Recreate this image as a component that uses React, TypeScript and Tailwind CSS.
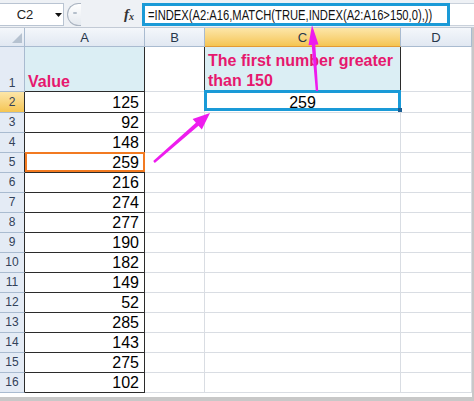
import React from "react";

const values = [125, 92, 148, 259, 216, 274, 277, 190, 182, 149, 52, 285, 143, 275, 102];

const grid = "border-r border-b border-[#d9dde3]";
const hdrBase =
  "flex items-center justify-center border-r border-b border-[#a9bbd0] text-[13px] leading-none text-[#27364a]";
const hdrNormal = "bg-linear-to-b from-[#f4f7fb] to-[#e1e8f2]";
const hdrSel = "bg-linear-to-b from-[#fce6a8] to-[#f5c550] border-b-[#e39a35]";

function RowHdr({ n, selected, tall }: { n: number; selected?: boolean; tall?: boolean }) {
  return (
    <div
      className={`flex justify-center border-b text-[12px] text-[#33425a] ${
        tall ? "items-end pb-[2px] leading-none border-r border-[#a9bbd0]" : "items-center leading-[19px] border-r border-b-[#a9bbd0] border-r-[#2b2b2b]"
      } ${selected ? "bg-linear-to-b from-[#fce6a8] to-[#f5c550]" : "bg-[#e4ebf5]"}`}
    >
      {n}
    </div>
  );
}

export default function App() {
  return (
    <div className="relative h-[401px] w-[474px] overflow-hidden bg-white font-['Liberation_Sans',Arial,sans-serif] text-black">
      {/* Formula bar */}
      <div className="flex h-[28px] border-b border-[#c2cad5] bg-[#eef1f5] pt-[3px] pb-px">
        <div className="flex w-[64px] items-center border-y border-r border-[#b9c4d2] bg-white">
          <span className="w-[50px] text-center text-[13px] leading-none text-[#222]">C2</span>
          <svg width="7" height="4" viewBox="0 0 7 4" className="ml-[5px]">
            <path d="M0 0H7L3.5 4Z" fill="#111" />
          </svg>
        </div>
        <div className="ml-[3px] flex w-[14px] items-start justify-center rounded-l-full border border-r-0 border-[#aab4c1] bg-linear-to-b from-white to-[#e4e9ef] pt-[8px]">
          <div className="h-[2px] w-[4px] rounded-full bg-[#b5bfcb]" />
        </div>
        <div className="flex w-[61px] items-center justify-end pr-[8px] text-[#333]">
          <span className="font-['Liberation_Serif',serif] text-[15px] font-bold italic leading-none">f</span>
          <span className="translate-y-[2px] font-['Liberation_Serif',serif] text-[10px] font-bold italic leading-none">x</span>
        </div>
        <div className="flex w-[308px] items-center overflow-hidden border-[3px] border-[#1a9ad7] bg-white pl-[3px]">
          <span className="inline-block origin-left scale-x-[0.8] whitespace-nowrap text-[14px] leading-none text-[#111]">
            =INDEX(A2:A16,MATCH(TRUE,INDEX(A2:A16&gt;150,0),))
          </span>
        </div>
        <div className="flex-1 border-y border-[#c9d1db] bg-white" />
      </div>

      {/* Sheet */}
      <div className="flex">
        <div className="grid grid-cols-[25px_120px_60px_196px_71px] grid-rows-[19px_45px_21px_repeat(14,20px)]">
          {/* Column headers */}
          <div className={`relative border-r border-b border-[#a9bbd0] ${hdrNormal}`}>
            <svg className="absolute left-[12px] top-[5px]" width="10" height="10" viewBox="0 0 10 10">
              <path d="M10 0V10H0Z" fill="#b6c2d0" />
            </svg>
          </div>
          <div className={`${hdrBase} ${hdrNormal}`}>A</div>
          <div className={`${hdrBase} ${hdrNormal}`}>B</div>
          <div className={`${hdrBase} ${hdrSel}`}>C</div>
          <div className={`${hdrBase} ${hdrNormal}`}>D</div>

          {/* Row 1 */}
          <RowHdr n={1} tall />
          <div className="flex items-end border-r border-b border-[#2b2b2b] bg-[#dbeef4] pb-px pl-[3px] text-[16px] font-bold leading-none text-[#e6186e]">
            Value
          </div>
          <div className="border-r border-b border-r-[#2b2b2b] border-b-[#d9dde3]" />
          <div className="flex flex-col justify-end border-r border-b border-r-[#2b2b2b] border-b-[#d9dde3] bg-[#dbeef4] pl-[3px] text-[16px] font-bold leading-[20px] text-[#e6186e]">
            <span>The first number greater</span>
            <span>than 150</span>
          </div>
          <div className={grid} />

          {/* Data rows */}
          {values.map((v, i) => {
            const r = i + 2;
            return (
              <React.Fragment key={r}>
                <RowHdr n={r} selected={r === 2} />
                <div className="relative flex items-center justify-end border-r border-b border-[#2b2b2b] pr-[5px] text-[16px] leading-[19px]">
                  {v}
                  {r === 5 && (
                    <div className="pointer-events-none absolute left-0 -top-px -right-px bottom-0 border-2 border-[#f27a21]" />
                  )}
                </div>
                <div className={grid} />
                {r === 2 ? (
                  <div className={`relative flex items-center justify-center text-[16px] leading-[19px] ${grid}`}>
                    259
                    <div className="pointer-events-none absolute -left-px -top-[2px] -right-px bottom-px border-[3px] border-[#1a9ad7]" />
                    <div className="absolute -right-[2px] bottom-0 h-[4px] w-[4px] bg-[#1d5f94]" />
                  </div>
                ) : (
                  <div className={grid} />
                )}
                <div className={grid} />
              </React.Fragment>
            );
          })}
        </div>
        <div className="w-[2px] bg-[#c8c8c8]" />
      </div>
      <div className="h-[4px] border-r-2 border-[#c8c8c8]" />
      <div className="h-[4px] bg-[#c8c8c8]" />

      {/* Annotation arrows */}
      <svg
        className="pointer-events-none absolute inset-0"
        width="474"
        height="401"
        viewBox="0 0 474 401"
      >
        <polygon
          points="153.2,161.1 195.9,122.7 192.6,118.9 210,113 201.8,129.5 198.5,125.7 154.8,162.9"
          fill="#ee1cee"
        />
        <polygon
          points="315.8,91.1 311.7,45 308.5,45.3 312,25 318.5,44.5 315.3,44.8 318.2,90.9"
          fill="#ee1cee"
        />
      </svg>
    </div>
  );
}
